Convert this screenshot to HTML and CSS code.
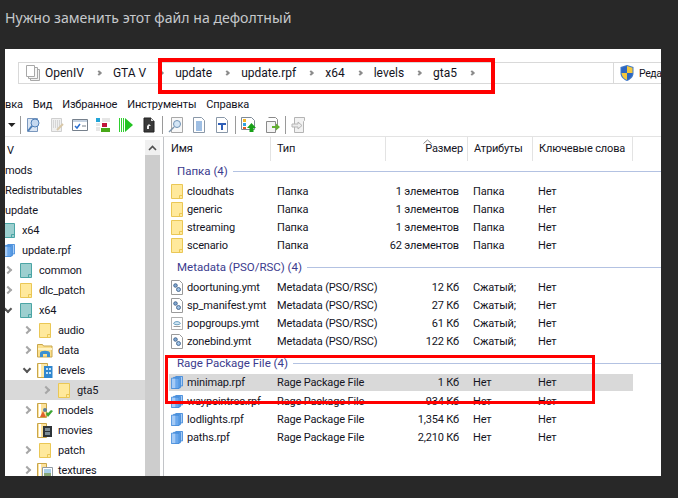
FILE: index.html
```html
<!DOCTYPE html>
<html lang="ru">

<head>
  <meta charset="UTF-8" />
  <title>Нужно заменить этот файл на дефолтный</title>
  <link rel="stylesheet" href="styles.css">
</head>

<body>
  <svg class="defs" width="0" height="0">
    <symbol id="folder" viewBox="0 0 12 15">
      <path d="M.5.5h11v14H.5z" />
      <path d="M8.5 14.5v-3h3" fill="none" />
    </symbol>
    <symbol id="rpf" viewBox="0 0 14 15">
      <path d="M5.500.5h8v11h-8z" fill="#a9cdf5" stroke="#3d86d8" />
      <path d="M3 1.500h8v12H3z" fill="#7fb4ee" stroke="#3d86d8" />
      <path d="M.5 2.500h9v12h-9z" fill="#6aa8ec" stroke="#3d86d8" />
      <path d="M1 3h4v11H1z" fill="#a5cbf6" />
    </symbol>
    <symbol id="ymt" viewBox="0 0 12 15">
      <path d="M.5.5h8l3 3v11H.5z" fill="#fff" stroke="#9a9a9a" />
      <circle cx="4.500" cy="5.500" r="1.800" fill="#7fa6d0" stroke="#33557f" stroke-width=".8" />
      <circle cx="7.500" cy="9.500" r="2" fill="#9cc0e4" stroke="#33557f" stroke-width=".8" />
    </symbol>
    <symbol id="ymt2" viewBox="0 0 14 15">
      <path d="M.5.500h13v14H.5z" fill="#fff" stroke="#a0a0a0" />
      <path d="M3 7.500c1-3 7-3 8 0-1 2-7 2-8 0z" fill="#cfe4f2" stroke="#3a7ea8" stroke-width=".8" />
      <path d="M3 11h8" stroke="#888" />
    </symbol>
    <symbol id="shield" viewBox="0 0 14 16">
      <path d="M7 0l6.500 2v6c0 4-3 6.500-6.500 8C3.500 14.500.5 12 .5 8V2z" fill="#3f78c8" />
      <path d="M7 1v7H1.500V3z" fill="#2d66c0" />
      <path d="M7 1l5.500 1.700V8H7z" fill="#f4c83c" />
      <path d="M1.500 8H7v7c-3-1-5-3.500-5.500-7z" fill="#f4c83c" />
      <path d="M7 8h5.500C12 11.500 10 14 7 15z" fill="#2d66c0" />
    </symbol>
    <symbol id="crumbs" viewBox="0 0 14 16">
      <path d="M4.500 4.500h9v11h-9z" fill="#f2f2f2" stroke="#a8a8a8" />
      <path d="M2.500 2.500h9v11h-9z" fill="#f6f6f6" stroke="#a8a8a8" />
      <path d="M.5.500h8v11h-8z" fill="#fff" stroke="#a8a8a8" />
    </symbol>
    <symbol id="open-data" viewBox="0 0 16 16">
      <path d="M.5 2.500h5l1 1.500h8.500v11H.5z" fill="#fbe08e" stroke="#c9a64a" />
      <path d="M1 6h14v2H1z" fill="#fff3c4" />
      <path d="M3 15v-4c0-3 10-3 10 0v4h-3v-3H6v3z" fill="#3b8fd0" />
    </symbol>
    <symbol id="open-levels" viewBox="0 0 16 16">
      <path d="M.5 1.500h10v14H.5z" fill="#fde9a8" stroke="#c9a64a" />
      <path d="M2 2h2v13H2z" fill="#fff" />
      <path d="M7 4h8.500v12H7z" fill="#2f86cf" />
      <path d="M9 6h2v2H9zm3 0h2v2h-2zM9 10h2v2H9zm3 0h2v2h-2z" fill="#bfe0f7" />
    </symbol>
    <symbol id="open-models" viewBox="0 0 16 16">
      <path d="M.5 1.500h9v14H.5z" fill="#fde29a" stroke="#c9a64a" />
      <path d="M2 2h2v13H2z" fill="#fff" />
      <path d="M3 15l3-6 3 6z" fill="#e0612c" />
      <circle cx="8" cy="8" r="2" fill="#5a7f9c" />
      <path d="M9 12l2 3 5-6-2-1-3 3-1-1z" fill="#3fa535" />
    </symbol>
    <symbol id="open-movies" viewBox="0 0 16 16">
      <path d="M.5 1.500h9v14H.5z" fill="#fde29a" stroke="#c9a64a" />
      <path d="M2 2h2v13H2z" fill="#fff" />
      <path d="M6 4h9v11H6z" fill="#2d3338" />
      <path d="M8 6h5v3H8zm0 4h5v3H8z" fill="#7b8b95" />
    </symbol>
    <symbol id="open-textures" viewBox="0 0 16 16">
      <path d="M.5 1.500h9v14H.5z" fill="#fde29a" stroke="#c9a64a" />
      <path d="M2 2h2v13H2z" fill="#fff" />
      <path d="M5.500 5.500h10v10h-10z" fill="#fff" stroke="#909aa4" />
      <path d="M7 7h7v4H7z" fill="#a8cfe8" />
      <path d="M7 11h7v3H7z" fill="#8aa878" />
    </symbol>
  </svg>

  <h1 class="topic-title">Нужно заменить этот файл на дефолтный</h1>

  <div class="shot">
    <div class="address">
      <svg class="crumb-icon"><use href="#crumbs" /></svg>
      <span class="crumb">OpenIV</span>
      <span class="crumb-arrow"></span>
      <span class="crumb">GTA V</span>
      <span class="crumb-arrow"></span>
      <span class="crumb">update</span>
      <span class="crumb-arrow"></span>
      <span class="crumb">update.rpf</span>
      <span class="crumb-arrow"></span>
      <span class="crumb">x64</span>
      <span class="crumb-arrow"></span>
      <span class="crumb">levels</span>
      <span class="crumb-arrow"></span>
      <span class="crumb">gta5</span>
      <span class="crumb-arrow"></span>
      <div class="edit-mode">
        <svg class="shield"><use href="#shield" /></svg>
        <span>Реда</span>
      </div>
    </div>

    <div class="menu">
      <span class="menu-cut">вка</span>
      <span>Вид</span>
      <span>Избранное</span>
      <span>Инструменты</span>
      <span>Справка</span>
    </div>

    <div class="toolbar">
      <svg class="tb-drop" viewBox="0 0 8 16"><path d="M0 6h7.500L3.750 10z" fill="#222" /></svg>
      <i class="tb-sep first"></i>
      <svg class="tb" viewBox="0 0 16 16">
        <path d="M1.500 1.500h10v13h-10z" fill="#dbe6f4" stroke="#7a97bd" />
        <circle cx="9" cy="6" r="4" fill="#c4d8f0" stroke="#4e7fb8" />
        <path d="M6 9l-4 5" stroke="#4e7fb8" stroke-width="2" />
      </svg>
      <svg class="tb" viewBox="0 0 16 16">
        <path d="M2.500 1.500h10v13h-10z" fill="#f0f0f0" stroke="#cfcfcf" />
        <path d="M4 4h7M4 6h7M4 8h7M4 10h7" stroke="#bbb" stroke-dasharray="1 1" />
        <path d="M8 13l6-6" stroke="#d8c8a8" stroke-width="2" />
      </svg>
      <svg class="tb" viewBox="0 0 16 16">
        <path d="M.5 2.500h15v11H.5z" fill="#fff" stroke="#76808c" />
        <path d="M1 3h14v2H1z" fill="#c6d3e2" />
        <path d="M3 9l2 2 3-4" fill="none" stroke="#2a6fd0" stroke-width="1.500" />
        <path d="M10 9h4" stroke="#76808c" />
      </svg>
      <svg class="tb" viewBox="0 0 16 16">
        <path d="M1 1h4v4H1z" fill="#22a5d8" />
        <path d="M7 1h8v4H7z" fill="#e6e6e6" />
        <path d="M1 6h4v3H1z" fill="#e6e6e6" />
        <path d="M7 6h5v4H7z" fill="#c0163a" />
        <path d="M1 10h4v4H1z" fill="#e6e6e6" />
        <path d="M6 11h9v4H6z" fill="#48a818" />
      </svg>
      <svg class="tb" viewBox="0 0 16 16">
        <path d="M1 1h1v14H1zm2 0h1v14H3zm2 0h1v14H5z" fill="#2fcf2f" />
        <path d="M7 1l8 7-8 7z" fill="#22c322" />
      </svg>
      <svg class="tb" viewBox="0 0 16 16">
        <path d="M3 1h7l3 3v11H3z" fill="#3a3a3a" stroke="#222" />
        <path d="M10 1v3h3" fill="#ddd" />
        <path d="M6 12V9l2-2 2 2h-2v3z" fill="#eee" />
      </svg>
      <i class="tb-sep"></i>
      <svg class="tb" viewBox="0 0 16 16">
        <path d="M3.500.500h11v15h-11z" fill="#f8f8f8" stroke="#a8a8a8" />
        <circle cx="9" cy="7" r="3.500" fill="#d4e6f6" stroke="#6f92b4" />
        <path d="M6 10l-5 5" stroke="#7d95ac" stroke-width="1.500" />
      </svg>
      <svg class="tb" viewBox="0 0 16 16">
        <path d="M2.500.500h8l3 3v12h-11z" fill="#fff" stroke="#8a98a8" />
        <path d="M5 5h6M5 7h6M5 9h6M5 11h6M5 13h6" stroke="#3f7fc8" />
      </svg>
      <svg class="tb" viewBox="0 0 16 16">
        <path d="M2.500.500h8l3 3v12h-11z" fill="#fff" stroke="#8a98a8" />
        <path d="M4 6h8v2H9v5H7V8H4z" fill="#2f5fb8" />
      </svg>
      <i class="tb-sep"></i>
      <svg class="tb" viewBox="0 0 16 16">
        <path d="M.5.500h10l3 3v9h-13z" fill="#fff" stroke="#7e8a96" />
        <path d="M2 2h3v3H2z" fill="#f0b528" />
        <path d="M2 6h3v3H2z" fill="#2fa0e0" />
        <path d="M2 10h3v2H2z" fill="#e05a28" />
        <path d="M6 11l4.500-5 4.500 5h-2.500v4h-4v-4z" fill="#18a018" />
      </svg>
      <svg class="tb" viewBox="0 0 16 16">
        <path d="M2.500 4.500h9v11h-9z" fill="#f4f4f4" stroke="#8a8a8a" />
        <path d="M4.500.500h7l2 2v6" fill="none" stroke="#8a8a8a" />
        <path d="M8 9h4V6.500l4 3.500-4 3.500V11H8z" fill="#62b030" />
      </svg>
      <i class="tb-sep"></i>
      <svg class="tb" viewBox="0 0 16 16">
        <path d="M3.500.500h10v3l-1 1v11h-9z" fill="#f2f2f2" stroke="#b4b4b4" />
        <path d="M1 7h6V5l4 3.500L7 12v-2H1z" fill="#ececec" stroke="#b4b4b4" />
      </svg>
    </div>

    <div class="panes">
      <div class="tree-wrap">
        <ul class="tree">
          <li class="node top"><span class="node-name">V</span></li>
          <li class="node root"><span class="node-name">mods</span></li>
          <li class="node root"><span class="node-name">Redistributables</span></li>
          <li class="node root"><span class="node-name">update</span></li>
          <li class="node lv1"><svg class="ico teal"><use href="#folder" /></svg><span class="node-name">x64</span></li>
          <li class="node lv1"><svg class="ico plain"><use href="#rpf" /></svg><span class="node-name">update.rpf</span></li>
          <li class="node lv2"><i class="arrow"></i><svg class="ico teal"><use href="#folder" /></svg><span class="node-name">common</span></li>
          <li class="node lv2"><i class="arrow"></i><svg class="ico yellow"><use href="#folder" /></svg><span class="node-name">dlc_patch</span></li>
          <li class="node lv2"><i class="arrow open"></i><svg class="ico teal"><use href="#folder" /></svg><span class="node-name">x64</span></li>
          <li class="node lv3"><i class="arrow"></i><svg class="ico yellow"><use href="#folder" /></svg><span class="node-name">audio</span></li>
          <li class="node lv3"><i class="arrow"></i><svg class="ico-wide"><use href="#open-data" /></svg><span class="node-name">data</span></li>
          <li class="node lv3"><i class="arrow open"></i><svg class="ico-wide"><use href="#open-levels" /></svg><span class="node-name">levels</span></li>
          <li class="node lv4 selected"><i class="arrow"></i><svg class="ico yellow"><use href="#folder" /></svg><span class="node-name">gta5</span></li>
          <li class="node lv3"><i class="arrow"></i><svg class="ico-wide"><use href="#open-models" /></svg><span class="node-name">models</span></li>
          <li class="node lv3"><i class="arrow none"></i><svg class="ico-wide"><use href="#open-movies" /></svg><span class="node-name">movies</span></li>
          <li class="node lv3"><i class="arrow"></i><svg class="ico yellow"><use href="#folder" /></svg><span class="node-name">patch</span></li>
          <li class="node lv3"><i class="arrow"></i><svg class="ico-wide"><use href="#open-textures" /></svg><span class="node-name">textures</span></li>
        </ul>
        <div class="scrollbar">
          <div class="scroll-up"><svg width="9" height="6" viewBox="0 0 9 6"><path d="M1 5l3.500-3.500L8 5" fill="none" stroke="#505050" stroke-width="1.600" /></svg></div>
          <div class="scroll-thumb"></div>
        </div>
      </div>

      <div class="list">
        <div class="list-head">
          <div class="col-name">Имя</div>
          <div class="col-type">Тип</div>
          <div class="col-size">
            <svg class="sort-mark" width="9" height="5" viewBox="0 0 9 5"><path d="M.5 4.500l4-3.500 4 3.500" fill="none" stroke="#888" /></svg>
            Размер
          </div>
          <div class="col-attr">Атрибуты</div>
          <div class="col-keys">Ключевые слова</div>
        </div>

        <div class="group">
          <div class="group-title"><span>Папка (4)</span></div>
          <div class="row"><span class="file"><svg class="ico yellow"><use href="#folder" /></svg>cloudhats</span><span>Папка</span><span class="size">1 элементов</span><span class="attr">Папка</span><span>Нет</span></div>
          <div class="row"><span class="file"><svg class="ico yellow"><use href="#folder" /></svg>generic</span><span>Папка</span><span class="size">1 элементов</span><span class="attr">Папка</span><span>Нет</span></div>
          <div class="row"><span class="file"><svg class="ico yellow"><use href="#folder" /></svg>streaming</span><span>Папка</span><span class="size">1 элементов</span><span class="attr">Папка</span><span>Нет</span></div>
          <div class="row"><span class="file"><svg class="ico yellow"><use href="#folder" /></svg>scenario</span><span>Папка</span><span class="size">62 элементов</span><span class="attr">Папка</span><span>Нет</span></div>
        </div>

        <div class="group">
          <div class="group-title"><span>Metadata (PSO/RSC) (4)</span></div>
          <div class="row"><span class="file"><svg class="ico plain"><use href="#ymt" /></svg>doortuning.ymt</span><span>Metadata (PSO/RSC)</span><span class="size">12 Кб</span><span class="attr">Сжатый;</span><span>Нет</span></div>
          <div class="row"><span class="file"><svg class="ico plain"><use href="#ymt" /></svg>sp_manifest.ymt</span><span>Metadata (PSO/RSC)</span><span class="size">27 Кб</span><span class="attr">Сжатый;</span><span>Нет</span></div>
          <div class="row"><span class="file"><svg class="ico plain"><use href="#ymt2" /></svg>popgroups.ymt</span><span>Metadata (PSO/RSC)</span><span class="size">61 Кб</span><span class="attr">Сжатый;</span><span>Нет</span></div>
          <div class="row"><span class="file"><svg class="ico plain"><use href="#ymt" /></svg>zonebind.ymt</span><span>Metadata (PSO/RSC)</span><span class="size">122 Кб</span><span class="attr">Сжатый;</span><span>Нет</span></div>
        </div>

        <div class="group">
          <div class="group-title"><span>Rage Package File (4)</span></div>
          <div class="row selected"><span class="file"><svg class="ico plain"><use href="#rpf" /></svg>minimap.rpf</span><span>Rage Package File</span><span class="size">1 Кб</span><span class="attr">Нет</span><span>Нет</span></div>
          <div class="row"><span class="file"><svg class="ico plain"><use href="#rpf" /></svg>waypointrec.rpf</span><span>Rage Package File</span><span class="size">934 Кб</span><span class="attr">Нет</span><span>Нет</span></div>
          <div class="row"><span class="file"><svg class="ico plain"><use href="#rpf" /></svg>lodlights.rpf</span><span>Rage Package File</span><span class="size">1,354 Кб</span><span class="attr">Нет</span><span>Нет</span></div>
          <div class="row"><span class="file"><svg class="ico plain"><use href="#rpf" /></svg>paths.rpf</span><span>Rage Package File</span><span class="size">2,210 Кб</span><span class="attr">Нет</span><span>Нет</span></div>
        </div>
      </div>
    </div>

    <div class="mark mark-path"></div>
    <div class="mark mark-files"></div>
  </div>
</body>

</html>
```

FILE: styles.css
```css
body {
  margin: 0;
  width: 678px;
  height: 498px;
  overflow: hidden;
  background-color: #282828;
  font-family: "Noto Sans", sans-serif;
}

.defs {
  position: absolute;
}

.topic-title {
  margin: 0;
  height: 49px;
  padding: 8px 0 0 5px;
  box-sizing: border-box;
  font-size: 14.100px;
  font-weight: 400;
  line-height: 20px;
  color: #c6c9cc;
}

.shot {
  position: relative;
  width: 656px;
  height: 427px;
  margin-left: 5px;
  padding-top: 13px;
  box-sizing: border-box;
  overflow: hidden;
  background-color: #fff;
  color: #14141e;
  font-family: Roboto, sans-serif;
  font-size: 11px;
  letter-spacing: -0.15px;
}

/* address bar */
.address {
  display: flex;
  align-items: center;
  height: 22px;
  margin-left: 13px;
  padding-left: 7px;
  box-sizing: border-box;
  border: 1px solid #d9d9d9;
  border-right: none;
  white-space: nowrap;
  font-size: 12px;
  letter-spacing: 0;
}

.crumb-icon {
  width: 14px;
  height: 16px;
  margin-right: 5px;
  flex: none;
}

.crumb-arrow {
  flex: none;
  width: 4px;
  height: 4px;
  margin: 0 12px 0 13px;
  border-top: 2px solid #8c8c8c;
  border-right: 2px solid #8c8c8c;
  box-sizing: border-box;
  transform: rotate(45deg);
}

.edit-mode {
  display: flex;
  align-items: center;
  gap: 5px;
  position: absolute;
  left: 608px;
  width: 48px;
  height: 20px;
  padding-left: 6px;
  border-left: 1px solid #d9d9d9;
  box-sizing: border-box;
  font-size: 10.500px;
  letter-spacing: -0.4px;
}

.shield {
  width: 14px;
  height: 16px;
  flex: none;
}

/* menu + toolbar */
.menu {
  display: flex;
  align-items: center;
  gap: 10px;
  height: 20px;
  margin-top: 10px;
  white-space: nowrap;
}

.toolbar {
  display: flex;
  align-items: center;
  gap: 7px;
  height: 22px;
  padding-left: 3px;
  box-sizing: border-box;
}

.tb {
  width: 16px;
  height: 16px;
  flex: none;
}

.tb-drop {
  width: 8px;
  height: 16px;
  flex: none;
}

.tb-sep {
  width: 1px;
  height: 18px;
  margin: 0 -2px;
  background-color: #9a9a9a;
  flex: none;
}

.tb-sep.first {
  margin-left: -3px;
}

/* panes */
.panes {
  display: flex;
  height: 340px;
  border-top: 1px solid #e3e3e3;
}

.tree-wrap {
  display: flex;
  flex: none;
  width: 155px;
  margin-right: 3px;
}

.tree {
  flex: none;
  width: 140px;
  margin: 0;
  padding: 3px 0 0;
  overflow: hidden;
  list-style: none;
}

.node {
  display: flex;
  align-items: center;
  height: 20px;
  white-space: nowrap;
}

.node.top {
  padding-left: 2px;
}

.node.lv2 {
  padding-left: 1px;
}

.node.lv3 {
  padding-left: 20px;
}

.node.lv4 {
  padding-left: 39px;
}

.node.selected {
  background-color: #d9d9d9;
}

.node.lv1 .ico {
  margin-left: -2px;
}

.arrow {
  flex: none;
  width: 6px;
  height: 6px;
  margin: 0 9px 0 -1px;
  border-top: 2px solid #a6a6a6;
  border-right: 2px solid #a6a6a6;
  box-sizing: border-box;
  transform: rotate(45deg);
}

.arrow.open {
  border-color: #555;
  transform: translateY(-1px) rotate(135deg);
}

.arrow.none {
  visibility: hidden;
}

.ico {
  flex: none;
  width: 12px;
  height: 15px;
  margin-right: 7px;
  stroke-width: 1;
}

.ico.yellow {
  fill: #ffe99c;
  stroke: #eac755;
}

.ico.teal {
  fill: #9ccfcf;
  stroke: #4ba5a5;
}

.ico-wide {
  flex: none;
  width: 16px;
  height: 16px;
  margin: 0 5px 0 -2px;
}

.scrollbar {
  flex: none;
  display: flex;
  flex-direction: column;
  width: 15px;
  margin-top: 3px;
}

.scroll-up {
  display: flex;
  align-items: center;
  justify-content: center;
  height: 15px;
  background-color: #f0f0f0;
}

.scroll-thumb {
  flex: 1;
  background-color: #cdcdcd;
}

/* file list */
.list {
  flex: 1;
  min-width: 0;
  border-left: 1px solid #c2c4c8;
}

.list-head {
  display: flex;
  height: 24px;
  line-height: 24px;
}

.list-head > div {
  box-sizing: border-box;
  padding-left: 6px;
  border-right: 1px solid #e3e3e3;
  white-space: nowrap;
}

.list-head .col-name {
  width: 107px;
  padding-left: 7px;
}

.list-head .col-type {
  width: 115px;
}

.list-head .col-size {
  position: relative;
  width: 82px;
  padding: 0 4px 0 0;
  text-align: right;
}

.sort-mark {
  position: absolute;
  left: 37px;
  top: 2px;
}

.list-head .col-attr {
  width: 65px;
}

.list-head .col-keys {
  width: 100px;
}

.group {
  margin-top: 4px;
}

.list-head + .group {
  margin-top: 1px;
}

.group-title {
  display: flex;
  align-items: center;
  gap: 5px;
  height: 18px;
  margin: 0 0 2px 13px;
  font-size: 11.500px;
  letter-spacing: 0;
  color: #3b3b8e;
}

.group-title::after {
  content: "";
  flex: 1;
  height: 1px;
  background-color: #b3c2e2;
}

.row {
  display: grid;
  grid-template-columns: 106px 108px 74px 79px 1fr;
  align-items: center;
  width: 464px;
  height: 18px;
  margin-left: 5px;
  padding-left: 2px;
  box-sizing: border-box;
  white-space: nowrap;
}

.row.selected {
  height: 17px;
  margin-bottom: 1px;
  background-color: #d9d9d9;
}

.file {
  display: flex;
  align-items: center;
}

.file .ico {
  margin-right: 4px;
}

.size {
  text-align: right;
}

.attr {
  padding-left: 14px;
}

/* red annotation frames drawn over the screenshot */
.mark {
  position: absolute;
  border: 3px solid #f00;
  box-sizing: border-box;
}

.mark-path {
  left: 153px;
  top: 9px;
  width: 337px;
  height: 36px;
  border-width: 4px;
}

.mark-files {
  left: 160px;
  top: 306px;
  width: 430px;
  height: 49px;
}
```
